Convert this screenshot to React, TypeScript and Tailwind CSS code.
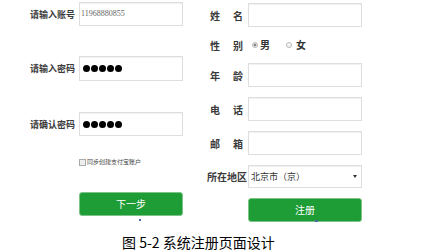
import React from "react";

const cjk = { fontFamily: '"Noto Sans CJK SC", "Noto Sans", sans-serif' };

function Box({ children, h = "h-[24px]" }: { children?: React.ReactNode; h?: string }) {
  return (
    <div
      className={`w-[114px] ${h} border border-[#dedede] bg-white shadow-[inset_0_1px_1px_rgba(0,0,0,0.06)] flex items-center`}
    >
      {children}
    </div>
  );
}

function RLabel({ a, b }: { a: string; b: string }) {
  return (
    <div className="w-[41px] pl-[3px] pr-[5px] flex justify-between text-[10px] font-bold text-[#3a3a3a]" style={cjk}>
      <span>{a}</span>
      <span>{b}</span>
    </div>
  );
}

function Dots() {
  return (
    <div className="flex gap-[1px] pl-[3px]">
      {[0, 1, 2, 3, 4].map((i) => (
        <div key={i} className="w-[7px] h-[7px] rounded-full bg-black" />
      ))}
    </div>
  );
}

export default function App() {
  return (
    <div className="w-[448px] h-[252px] bg-white flex flex-col overflow-hidden" style={cjk}>
      <div className="flex h-[234px]">
        {/* Left column */}
        <div className="ml-[30px] w-[153px] flex flex-col">
          <div className="mt-[2px] flex items-center">
            <div className="w-[49px] text-[9px] font-bold text-[#3a3a3a] leading-none">请输入账号</div>
            <div className="w-[104px] h-[24px] border border-[#dedede] bg-white shadow-[inset_0_1px_1px_rgba(0,0,0,0.06)] flex items-center">
              <span className="pl-[1px] text-[8px] text-[#666]" style={{ fontFamily: '"Liberation Serif", serif' }}>
                11968880855
              </span>
            </div>
          </div>
          <div className="mt-[30px] flex items-center">
            <div className="w-[49px] text-[9px] font-bold text-[#3a3a3a] leading-none">请输入密码</div>
            <div className="w-[104px] h-[25px] border border-[#dedede] bg-white shadow-[inset_0_1px_1px_rgba(0,0,0,0.06)] flex items-center">
              <Dots />
            </div>
          </div>
          <div className="mt-[31px] flex items-center">
            <div className="w-[49px] text-[9px] font-bold text-[#3a3a3a] leading-none">请确认密码</div>
            <div className="w-[104px] h-[24px] border border-[#dedede] bg-white shadow-[inset_0_1px_1px_rgba(0,0,0,0.06)] flex items-center">
              <Dots />
            </div>
          </div>
          <div className="mt-[22px] ml-[49px] flex items-center h-[8px]">
            <div className="w-[7px] h-[7px] border border-[#aaa] bg-[#eee]" />
            <span className="ml-[1px] text-[6px] leading-none text-[#444]">同步创建支付宝账户</span>
          </div>
          <div className="mt-[26px] ml-[49px] w-[104px] h-[24px] rounded-[3px] bg-[#1e9c35] border border-[#7cc488] flex items-center justify-center">
            <span className="text-[10px] text-white leading-none">下一步</span>
          </div>
          <div className="mt-[3px] ml-[109px] w-[2px] h-[2px] bg-[#4a6aa8]" />
        </div>

        {/* Right column */}
        <div className="ml-[24px] flex flex-col">
          <div className="mt-[3px] flex items-center">
            <RLabel a="姓" b="名" />
            <Box />
          </div>
          <div className="mt-[11px] h-[14px] flex items-center">
            <RLabel a="性" b="别" />
            <div className="ml-[4px] flex items-center">
              <div className="w-[6px] h-[6px] rounded-full border border-[#bbb] bg-[#ddd] flex items-center justify-center">
                <div className="w-[2px] h-[2px] rounded-full bg-[#666]" />
              </div>
              <span className="ml-[2px] text-[10px] font-bold text-[#333] leading-none">男</span>
            </div>
            <div className="ml-[16px] flex items-center">
              <div className="w-[6px] h-[6px] rounded-full border border-[#bbb] bg-[#f4f4f4]" />
              <span className="ml-[4px] text-[10px] font-bold text-[#333] leading-none">女</span>
            </div>
          </div>
          <div className="mt-[11px] flex items-center">
            <RLabel a="年" b="龄" />
            <Box />
          </div>
          <div className="mt-[10px] flex items-center">
            <RLabel a="电" b="话" />
            <Box />
          </div>
          <div className="mt-[10px] flex items-center">
            <RLabel a="邮" b="箱" />
            <Box />
          </div>
          <div className="mt-[10px] flex items-center">
            <div className="w-[41px] text-[10px] font-bold text-[#3a3a3a] leading-none">所在地区</div>
            <Box h="h-[23px]">
              <div className="flex-1 flex items-center justify-between pl-[2px] pr-[4px]">
                <span className="text-[9px] text-[#333] leading-none">北京市（京）</span>
                <svg width="4" height="3" viewBox="0 0 4 3">
                  <path d="M0 0 L4 0 L2 3 Z" fill="#333" />
                </svg>
              </div>
            </Box>
          </div>
          <div className="mt-[10px] flex">
            <div className="w-[41px]" />
            <div className="w-[114px] h-[24px] rounded-[3px] bg-[#1e9c35] border border-[#7cc488] flex items-center justify-center relative">
              <span className="text-[10px] text-white leading-none">注册</span>
              <div className="absolute bottom-[-1px] left-[66px] w-[3px] h-[2px] bg-[#4a6aa8]" />
            </div>
          </div>
        </div>
      </div>
      <div className="pl-[122px] text-[14px] leading-[16px] text-black">图 5-2 系统注册页面设计</div>
    </div>
  );
}
